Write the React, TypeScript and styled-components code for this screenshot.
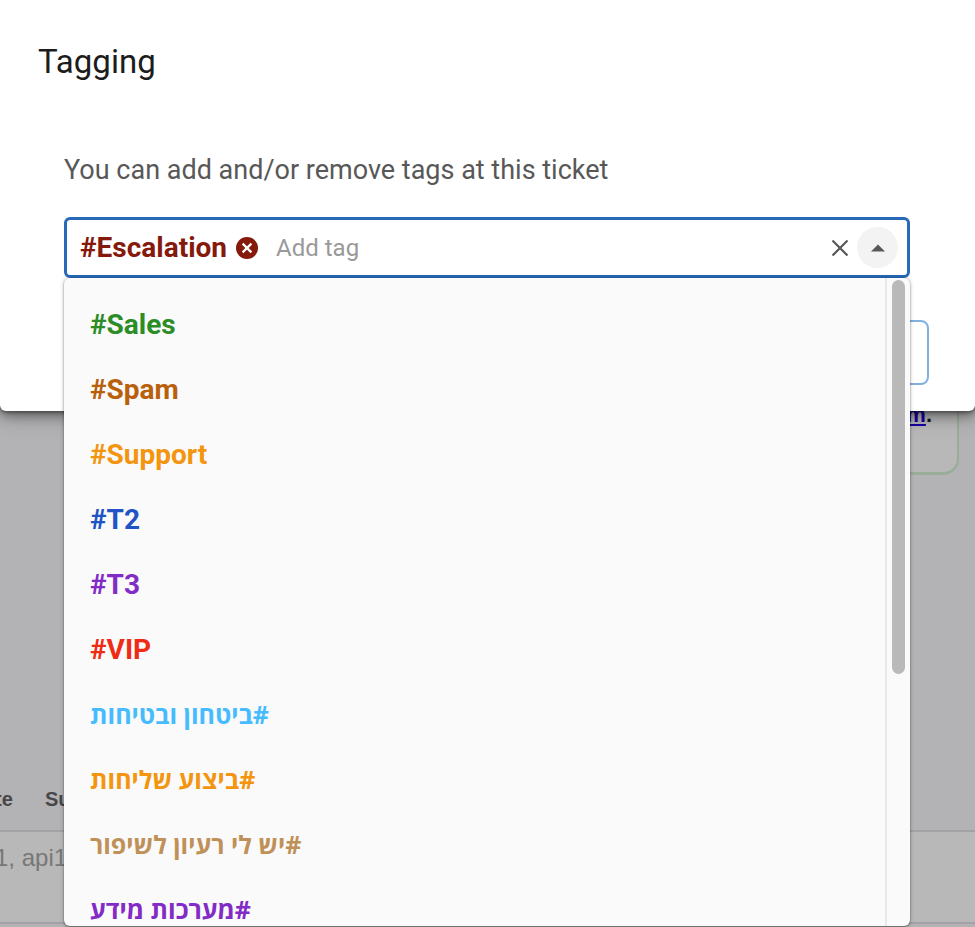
import React from "react";
import styled, { createGlobalStyle } from "styled-components";

const GlobalStyle = createGlobalStyle`
  *, *::before, *::after { box-sizing: border-box; }
  body { margin: 0; background: #b3b3b5; font-family: Roboto, "Open Sans", sans-serif; }
  button, input { font: inherit; margin: 0; padding: 0; border: 0; background: none; }
`;

const Page = styled.div`
  position: relative;
  min-height: 100vh;
  overflow: hidden;
`;

const TicketPage = styled.div`
  position: absolute;
  inset: 0;
  display: flex;
  flex-direction: column;
  justify-content: space-between;
  padding-bottom: 3px;
  overflow: hidden;
  font-family: "Liberation Sans", sans-serif;
`;

const NoticeCard = styled.div`
  display: flex;
  flex-direction: column;
  justify-content: flex-end;
  height: 475px;
  margin: 0 16px 0 80px;
  padding: 0 25px 45px;
  border: 3px solid #98ae98;
  border-width: 0 2px 3px 0;
  border-radius: 0 0 16px 0;
  background: #b8b8b8;
  font-size: 22px;
  font-weight: 700;
  line-height: 24px;
  text-align: right;
  color: #1a1a1a;
`;

const NoticeLink = styled.a`
  color: #1800a8;
  text-decoration-thickness: 2px;
  text-underline-offset: 2px;
`;

const TicketTable = styled.table`
  width: 100%;
  border-collapse: collapse;
  text-align: left;
  white-space: nowrap;
`;

const HeadCell = styled.th<{ $wide?: boolean }>`
  width: ${(p) => (p.$wide ? "auto" : "45px")};
  height: 66px;
  padding: 4px 0 0;
  border-bottom: 2px solid #a2a2a4;
  font-size: 20px;
  font-weight: 700;
  color: #474749;
`;

const BodyCell = styled.td`
  height: 92px;
  padding: 12px 0 0;
  border-bottom: 2px solid #a2a2a4;
  background: #b8b8b8;
  vertical-align: top;
  font-size: 24px;
  line-height: 28px;
  color: #777;
`;

const Shifted = styled.span`
  margin-left: -5px;
`;

const Dialog = styled.section`
  position: relative;
  padding: 40px 46px 26px 38px;
  border-radius: 0 0 6px 6px;
  background: #fff;
  box-shadow: 0 6px 12px rgba(0, 0, 0, 0.35), 0 4px 30px rgba(0, 0, 0, 0.14), 0 1px 4px rgba(0, 0, 0, 0.5);
`;

const Title = styled.h1`
  margin: 0;
  font-size: 33px;
  font-weight: 400;
  line-height: 44px;
  color: #1c1c1c;
`;

const Body = styled.div`
  padding: 69px 19px 0 26px;
`;

const Hint = styled.label`
  display: block;
  margin-bottom: 30px;
  font-size: 27px;
  line-height: 34px;
  color: #585858;
`;

const Combo = styled.div`
  position: relative;
`;

const Field = styled.div`
  display: flex;
  align-items: center;
  height: 61px;
  padding: 0 9px 0 13px;
  border: 3px solid #2869b8;
  border-radius: 6px;
  background: #fff;
`;

const Chip = styled.span`
  display: flex;
  align-items: center;
  gap: 9px;
  font-size: 28px;
  font-weight: 700;
  color: #85190c;
`;

const IconButton = styled.button`
  display: flex;
  align-items: center;
  justify-content: center;
  color: #585858;
  cursor: pointer;
`;

const RoundButton = styled(IconButton)`
  width: 41px;
  height: 41px;
  margin-left: 8px;
  border-radius: 50%;
  background: #f3f3f3;
`;

const TagInput = styled.input`
  flex: 1;
  min-width: 0;
  margin-left: 18px;
  outline: none;
  font-size: 24px;
  &::placeholder { color: #999; opacity: 1; }
`;

const Popup = styled.div`
  position: absolute;
  z-index: 2;
  top: 100%;
  left: 0;
  right: 0;
  display: flex;
  height: calc(100vh - 279px);
  border-radius: 6px;
  background: #fafafa;
  box-shadow: 0 0 4px rgba(0, 0, 0, 0.25), 0 1px 2px rgba(0, 0, 0, 0.4);
  overflow: hidden;
`;

const Options = styled.ul`
  flex: 1;
  margin: 0;
  padding: 14px 0;
  list-style: none;
  overflow: hidden;
`;

const Option = styled.li<{ $color: string; $hebrew?: boolean }>`
  height: 65px;
  padding: 0 26px;
  font-family: ${(p) => (p.$hebrew ? '"Open Sans", sans-serif' : "inherit")};
  font-size: ${(p) => (p.$hebrew ? "25px" : "28px")};
  font-weight: 700;
  line-height: 65px;
  text-align: left;
  white-space: nowrap;
  color: ${(p) => p.$color};
`;

const Track = styled.div`
  width: 25px;
  padding: 2px 5px 0;
  border-left: 2px solid #e8e8e8;
`;

const Thumb = styled.div`
  width: 13px;
  height: 61%;
  border-radius: 7px;
  background: #b9b9b9;
`;

const Footer = styled.footer`
  display: flex;
  justify-content: flex-end;
  margin-top: 42px;
`;

const OutlineButton = styled.button`
  width: 160px;
  height: 65px;
  border: 2px solid #82b1e0;
  border-radius: 8px;
`;

const tags = [
  { name: "#Sales", color: "#2c8d26" },
  { name: "#Spam", color: "#b9600c" },
  { name: "#Support", color: "#f3950f" },
  { name: "#T2", color: "#2054c6" },
  { name: "#T3", color: "#832bc6" },
  { name: "#VIP", color: "#ee2c16" },
  { name: "#ביטחון ובטיחות", color: "#46bcff", hebrew: true },
  { name: "#ביצוע שליחות", color: "#f3950f", hebrew: true },
  { name: "#יש לי רעיון לשיפור", color: "#bf9159", hebrew: true },
  { name: "#מערכות מידע", color: "#832bc6", hebrew: true },
];

export default function App() {
  return (
    <Page>
      <GlobalStyle />
      <TicketPage>
        <NoticeCard>
          <span><NoticeLink href="#">m</NoticeLink>.</span>
        </NoticeCard>
        <TicketTable>
          <thead>
            <tr>
              <HeadCell><Shifted>te</Shifted></HeadCell>
              <HeadCell $wide>Su</HeadCell>
            </tr>
          </thead>
          <tbody>
            <tr>
              <BodyCell colSpan={2}><Shifted>1, api1</Shifted></BodyCell>
            </tr>
          </tbody>
        </TicketTable>
      </TicketPage>
      <Dialog role="dialog" aria-labelledby="dialog-title">
        <Title id="dialog-title">Tagging</Title>
        <Body>
          <Hint htmlFor="tag-input">You can add and/or remove tags at this ticket</Hint>
          <Combo>
            <Field>
              <Chip>
                #Escalation
                <IconButton type="button" aria-label="Remove #Escalation">
                  <svg width="22" height="22" viewBox="0 0 22 22">
                    <circle cx="11" cy="11" r="11" fill="#85190c" />
                    <path d="M6.6 6.6l8.8 8.8M15.4 6.6l-8.8 8.8" stroke="#fff" strokeWidth="2.2" />
                  </svg>
                </IconButton>
              </Chip>
              <TagInput id="tag-input" type="text" placeholder="Add tag" />
              <IconButton type="button" aria-label="Clear tags">
                <svg width="18" height="18" viewBox="0 0 18 18">
                  <path d="M1.5 1.5l15 15M16.5 1.5l-15 15" stroke="#585858" strokeWidth="2.2" />
                </svg>
              </IconButton>
              <RoundButton type="button" aria-label="Close list">
                <svg width="14" height="8" viewBox="0 0 14 8">
                  <path d="M0 7.5L7 0.5l7 7z" fill="#585858" />
                </svg>
              </RoundButton>
            </Field>
            <Popup>
              <Options role="listbox" aria-label="Tags">
                {tags.map((t) => (
                  <Option key={t.name} role="option" dir={t.hebrew ? "rtl" : "ltr"} $color={t.color} $hebrew={t.hebrew}>
                    {t.name}
                  </Option>
                ))}
              </Options>
              <Track><Thumb /></Track>
            </Popup>
          </Combo>
        </Body>
        <Footer>
          <OutlineButton type="button" aria-label="Close" />
        </Footer>
      </Dialog>
    </Page>
  );
}
